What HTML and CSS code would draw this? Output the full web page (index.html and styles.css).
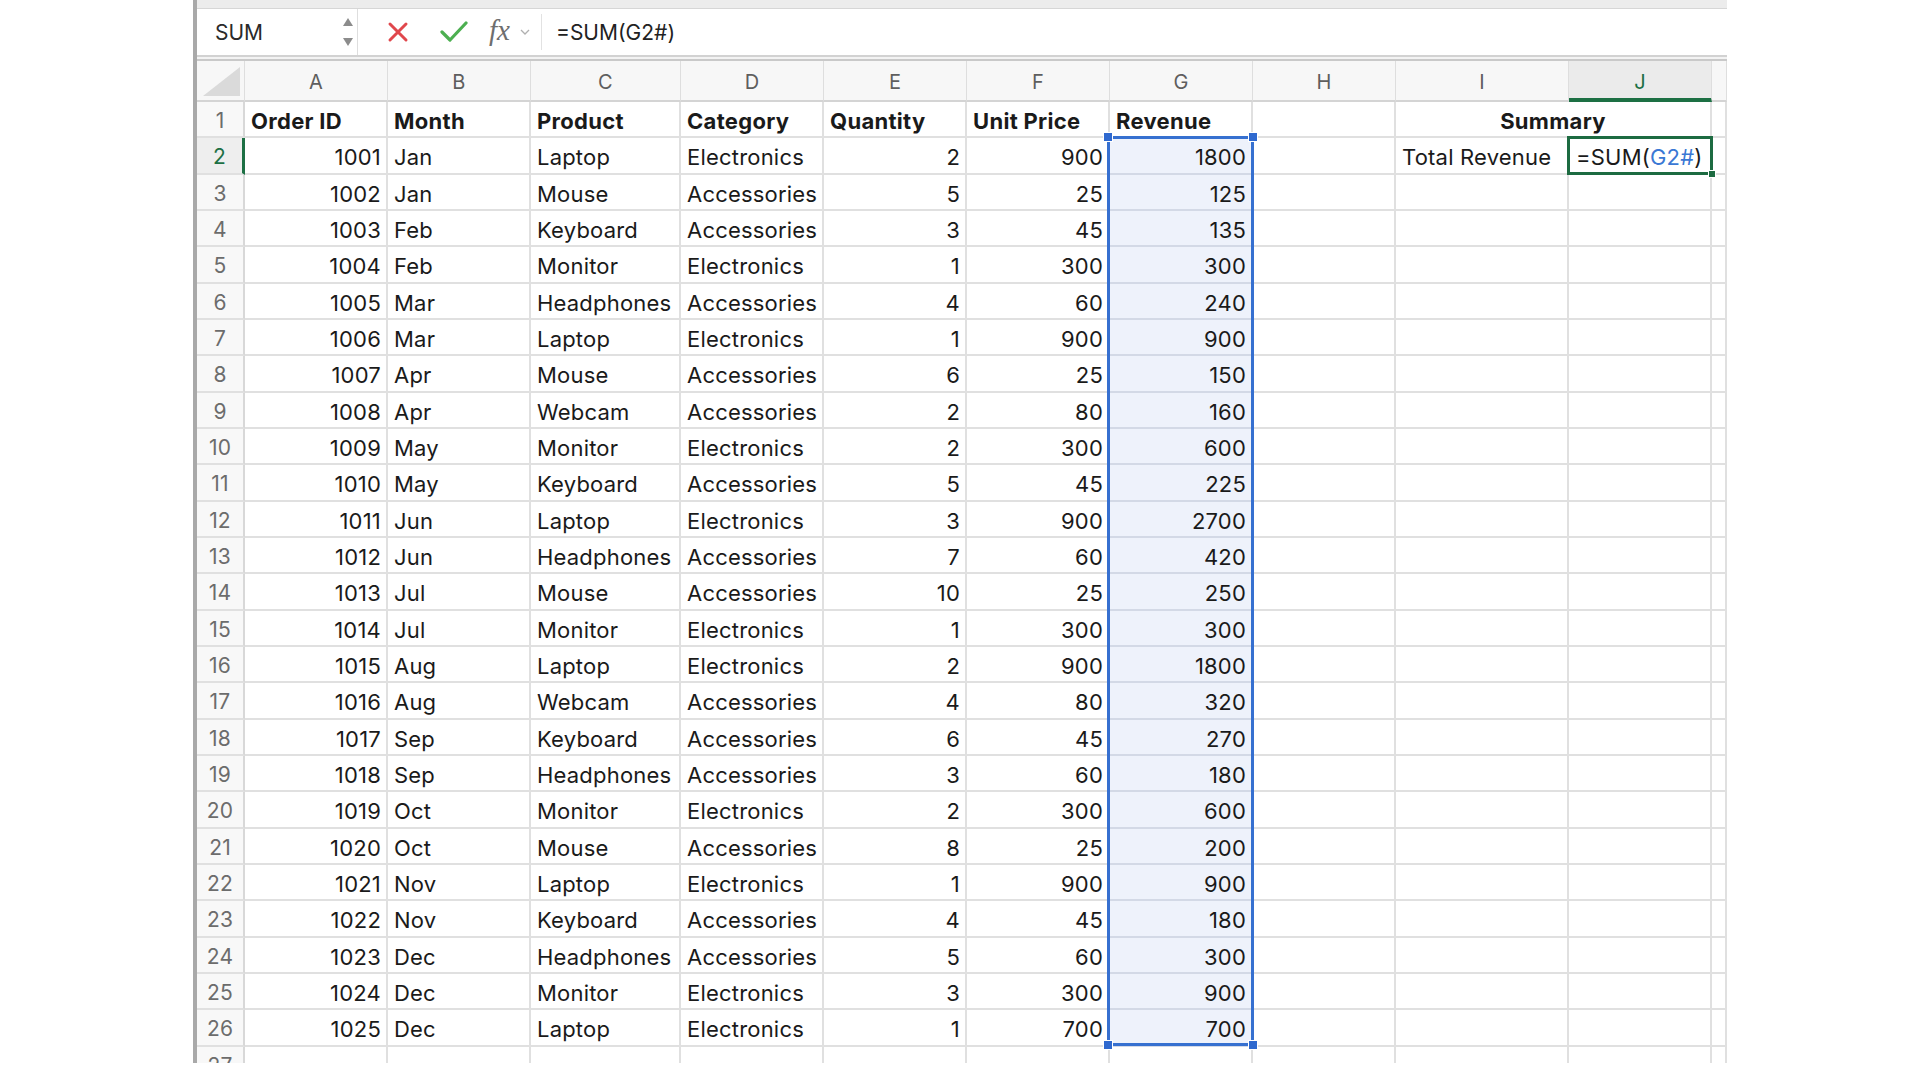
FILE: index.html
```html
<!DOCTYPE html>
<html lang="en">
<head>
<meta charset="utf-8">
<title>Sheet</title>
<link rel="stylesheet" href="styles.css">
</head>
<body>
<div class="app">
  <div class="top-strip"></div>
  <div class="fbar">
    <div class="namebox">
      <span class="nb-text">SUM</span>
      <span class="nb-arrows">
        <svg width="12" height="30" viewBox="0 0 12 30"><path d="M6 1 L11 9 L1 9 Z" fill="#8c8c8c"/><path d="M6 29 L11 21 L1 21 Z" fill="#8c8c8c"/></svg>
      </span>
    </div>
    <div class="fb-icons">
      <svg class="ic-x" width="22" height="22" viewBox="0 0 22 22"><path d="M3 3 L19 19 M19 3 L3 19" stroke="#e0474c" stroke-width="3" stroke-linecap="round"/></svg>
      <svg class="ic-ok" width="28" height="24" viewBox="0 0 28 24"><path d="M2 12 L10 20 L26 3" fill="none" stroke="#4caf50" stroke-width="3.2" stroke-linecap="round" stroke-linejoin="round"/></svg>
      <span class="fx">fx</span>
      <svg class="ic-chev" width="10" height="8" viewBox="0 0 10 8"><path d="M1 2 L5 6 L9 2" fill="none" stroke="#b0b0b0" stroke-width="1.3"/></svg>
    </div>
    <div class="fb-input">=SUM(G2#)</div>
  </div>
  <div class="fbar-bottom"></div>

  <div class="grid">
    <div class="row hdr">
      <div class="c corner"><span class="tri"></span></div>
      <div class="c ch">A</div><div class="c ch">B</div><div class="c ch">C</div><div class="c ch">D</div><div class="c ch">E</div><div class="c ch">F</div><div class="c ch">G</div><div class="c ch">H</div><div class="c ch">I</div><div class="c ch active">J</div><div class="c ch"></div>
    </div>
    <div class="row">
      <div class="c rh">1</div>
      <div class="c b">Order ID</div><div class="c b">Month</div><div class="c b">Product</div><div class="c b">Category</div><div class="c b">Quantity</div><div class="c b">Unit Price</div><div class="c b">Revenue</div><div class="c"></div><div class="c b merged">Summary</div><div class="c"></div>
    </div>
    <div class="row">
      <div class="c rh active">2</div>
      <div class="c n">1001</div><div class="c">Jan</div><div class="c">Laptop</div><div class="c">Electronics</div><div class="c n">2</div><div class="c n">900</div><div class="c n sel first">1800<div class="range"><span class="hd tl"></span><span class="hd tr"></span><span class="hd bl"></span><span class="hd br"></span></div></div><div class="c"></div><div class="c">Total Revenue</div><div class="c edit"><span class="et">=SUM(<span class="ref">G2#</span>)</span><div class="cur"><span class="hg"></span></div></div><div class="c"></div>
    </div>
    <div class="row"><div class="c rh">3</div><div class="c n">1002</div><div class="c">Jan</div><div class="c">Mouse</div><div class="c">Accessories</div><div class="c n">5</div><div class="c n">25</div><div class="c n sel">125</div><div class="c"></div><div class="c"></div><div class="c"></div><div class="c"></div></div>
    <div class="row"><div class="c rh">4</div><div class="c n">1003</div><div class="c">Feb</div><div class="c">Keyboard</div><div class="c">Accessories</div><div class="c n">3</div><div class="c n">45</div><div class="c n sel">135</div><div class="c"></div><div class="c"></div><div class="c"></div><div class="c"></div></div>
    <div class="row"><div class="c rh">5</div><div class="c n">1004</div><div class="c">Feb</div><div class="c">Monitor</div><div class="c">Electronics</div><div class="c n">1</div><div class="c n">300</div><div class="c n sel">300</div><div class="c"></div><div class="c"></div><div class="c"></div><div class="c"></div></div>
    <div class="row"><div class="c rh">6</div><div class="c n">1005</div><div class="c">Mar</div><div class="c">Headphones</div><div class="c">Accessories</div><div class="c n">4</div><div class="c n">60</div><div class="c n sel">240</div><div class="c"></div><div class="c"></div><div class="c"></div><div class="c"></div></div>
    <div class="row"><div class="c rh">7</div><div class="c n">1006</div><div class="c">Mar</div><div class="c">Laptop</div><div class="c">Electronics</div><div class="c n">1</div><div class="c n">900</div><div class="c n sel">900</div><div class="c"></div><div class="c"></div><div class="c"></div><div class="c"></div></div>
    <div class="row"><div class="c rh">8</div><div class="c n">1007</div><div class="c">Apr</div><div class="c">Mouse</div><div class="c">Accessories</div><div class="c n">6</div><div class="c n">25</div><div class="c n sel">150</div><div class="c"></div><div class="c"></div><div class="c"></div><div class="c"></div></div>
    <div class="row"><div class="c rh">9</div><div class="c n">1008</div><div class="c">Apr</div><div class="c">Webcam</div><div class="c">Accessories</div><div class="c n">2</div><div class="c n">80</div><div class="c n sel">160</div><div class="c"></div><div class="c"></div><div class="c"></div><div class="c"></div></div>
    <div class="row"><div class="c rh">10</div><div class="c n">1009</div><div class="c">May</div><div class="c">Monitor</div><div class="c">Electronics</div><div class="c n">2</div><div class="c n">300</div><div class="c n sel">600</div><div class="c"></div><div class="c"></div><div class="c"></div><div class="c"></div></div>
    <div class="row"><div class="c rh">11</div><div class="c n">1010</div><div class="c">May</div><div class="c">Keyboard</div><div class="c">Accessories</div><div class="c n">5</div><div class="c n">45</div><div class="c n sel">225</div><div class="c"></div><div class="c"></div><div class="c"></div><div class="c"></div></div>
    <div class="row"><div class="c rh">12</div><div class="c n">1011</div><div class="c">Jun</div><div class="c">Laptop</div><div class="c">Electronics</div><div class="c n">3</div><div class="c n">900</div><div class="c n sel">2700</div><div class="c"></div><div class="c"></div><div class="c"></div><div class="c"></div></div>
    <div class="row"><div class="c rh">13</div><div class="c n">1012</div><div class="c">Jun</div><div class="c">Headphones</div><div class="c">Accessories</div><div class="c n">7</div><div class="c n">60</div><div class="c n sel">420</div><div class="c"></div><div class="c"></div><div class="c"></div><div class="c"></div></div>
    <div class="row"><div class="c rh">14</div><div class="c n">1013</div><div class="c">Jul</div><div class="c">Mouse</div><div class="c">Accessories</div><div class="c n">10</div><div class="c n">25</div><div class="c n sel">250</div><div class="c"></div><div class="c"></div><div class="c"></div><div class="c"></div></div>
    <div class="row"><div class="c rh">15</div><div class="c n">1014</div><div class="c">Jul</div><div class="c">Monitor</div><div class="c">Electronics</div><div class="c n">1</div><div class="c n">300</div><div class="c n sel">300</div><div class="c"></div><div class="c"></div><div class="c"></div><div class="c"></div></div>
    <div class="row"><div class="c rh">16</div><div class="c n">1015</div><div class="c">Aug</div><div class="c">Laptop</div><div class="c">Electronics</div><div class="c n">2</div><div class="c n">900</div><div class="c n sel">1800</div><div class="c"></div><div class="c"></div><div class="c"></div><div class="c"></div></div>
    <div class="row"><div class="c rh">17</div><div class="c n">1016</div><div class="c">Aug</div><div class="c">Webcam</div><div class="c">Accessories</div><div class="c n">4</div><div class="c n">80</div><div class="c n sel">320</div><div class="c"></div><div class="c"></div><div class="c"></div><div class="c"></div></div>
    <div class="row"><div class="c rh">18</div><div class="c n">1017</div><div class="c">Sep</div><div class="c">Keyboard</div><div class="c">Accessories</div><div class="c n">6</div><div class="c n">45</div><div class="c n sel">270</div><div class="c"></div><div class="c"></div><div class="c"></div><div class="c"></div></div>
    <div class="row"><div class="c rh">19</div><div class="c n">1018</div><div class="c">Sep</div><div class="c">Headphones</div><div class="c">Accessories</div><div class="c n">3</div><div class="c n">60</div><div class="c n sel">180</div><div class="c"></div><div class="c"></div><div class="c"></div><div class="c"></div></div>
    <div class="row"><div class="c rh">20</div><div class="c n">1019</div><div class="c">Oct</div><div class="c">Monitor</div><div class="c">Electronics</div><div class="c n">2</div><div class="c n">300</div><div class="c n sel">600</div><div class="c"></div><div class="c"></div><div class="c"></div><div class="c"></div></div>
    <div class="row"><div class="c rh">21</div><div class="c n">1020</div><div class="c">Oct</div><div class="c">Mouse</div><div class="c">Accessories</div><div class="c n">8</div><div class="c n">25</div><div class="c n sel">200</div><div class="c"></div><div class="c"></div><div class="c"></div><div class="c"></div></div>
    <div class="row"><div class="c rh">22</div><div class="c n">1021</div><div class="c">Nov</div><div class="c">Laptop</div><div class="c">Electronics</div><div class="c n">1</div><div class="c n">900</div><div class="c n sel">900</div><div class="c"></div><div class="c"></div><div class="c"></div><div class="c"></div></div>
    <div class="row"><div class="c rh">23</div><div class="c n">1022</div><div class="c">Nov</div><div class="c">Keyboard</div><div class="c">Accessories</div><div class="c n">4</div><div class="c n">45</div><div class="c n sel">180</div><div class="c"></div><div class="c"></div><div class="c"></div><div class="c"></div></div>
    <div class="row"><div class="c rh">24</div><div class="c n">1023</div><div class="c">Dec</div><div class="c">Headphones</div><div class="c">Accessories</div><div class="c n">5</div><div class="c n">60</div><div class="c n sel">300</div><div class="c"></div><div class="c"></div><div class="c"></div><div class="c"></div></div>
    <div class="row"><div class="c rh">25</div><div class="c n">1024</div><div class="c">Dec</div><div class="c">Monitor</div><div class="c">Electronics</div><div class="c n">3</div><div class="c n">300</div><div class="c n sel">900</div><div class="c"></div><div class="c"></div><div class="c"></div><div class="c"></div></div>
    <div class="row"><div class="c rh">26</div><div class="c n">1025</div><div class="c">Dec</div><div class="c">Laptop</div><div class="c">Electronics</div><div class="c n">1</div><div class="c n">700</div><div class="c n sel last">700</div><div class="c"></div><div class="c"></div><div class="c"></div><div class="c"></div></div>
    <div class="row"><div class="c rh">27</div><div class="c"></div><div class="c"></div><div class="c"></div><div class="c"></div><div class="c"></div><div class="c"></div><div class="c"></div><div class="c"></div><div class="c"></div><div class="c"></div><div class="c"></div></div>
  </div>
</div>
</body>
</html>
```

FILE: styles.css
```css
* { box-sizing: border-box; }
html, body { margin: 0; padding: 0; background: #ffffff; }
body {
  font-family: Inter, "Liberation Sans", sans-serif;
  color: #1a1a1a;
  width: 1920px;
  height: 1080px;
  overflow: hidden;
}
.app {
  margin-left: 193px;
  width: 1534px;
  height: 1063px;
  border-left: 4px solid #a9a9a9;
  overflow: hidden;
  display: flex;
  flex-direction: column;
}
.top-strip {
  height: 9px;
  flex: none;
  background: #ececec;
  border-bottom: 1px solid #d6d6d6;
}
.fbar {
  height: 46px;
  flex: none;
  display: flex;
  align-items: stretch;
  background: #ffffff;
}
.namebox {
  width: 161px;
  flex: none;
  display: flex;
  align-items: center;
  justify-content: space-between;
  padding: 0 3px 0 18px;
  border-right: 1px solid #dedede;
}
.nb-text { font-size: 21px; color: #2a2a2a; }
.nb-arrows { display: flex; align-items: center; }
.fb-icons {
  width: 184px;
  flex: none;
  display: flex;
  align-items: center;
  padding-left: 29px;
  border-right: 1px solid #e2e2e2;
  margin: 5px 0;
}
.ic-x { margin-right: 31px; }
.ic-ok { margin-right: 21px; }
.fx {
  font-family: "Liberation Serif", "DejaVu Serif", serif;
  font-style: italic;
  font-size: 29px;
  color: #6e6e6e;
  margin-right: 10px;
  line-height: 1;
  margin-top: -3px;
}
.fb-input {
  flex: 1;
  display: flex;
  align-items: center;
  padding-left: 14px;
  font-size: 21px;
  color: #222;
}
.fbar-bottom {
  height: 6px;
  flex: none;
  border-top: 2px solid #d2d2d2;
  border-bottom: 2px solid #c9c9c9;
  background: #f3f3f3;
}
.grid { flex: none; }
.row {
  display: grid;
  grid-template-columns: 48px 143px 143px 150px 143px 143px 143px 143px 143px 173px 143px 15px;
  height: 36.33px;
}
.row.hdr { height: 41px; }
.c {
  border-right: 2px solid #e0e0e0;
  border-bottom: 2px solid #e0e0e0;
  padding: 0 6px;
  font-size: 22px;
  letter-spacing: 0.2px;
  white-space: nowrap;
  display: flex;
  align-items: center;
  padding-top: 4px;
  min-width: 0;
}
.c.n { justify-content: flex-end; padding-right: 5px; }
.c.b { font-weight: 700; letter-spacing: 0.3px; }
.merged { grid-column: span 2; justify-content: center; }
.hdr .c {
  background: #f7f7f7;
  border-bottom: 2px solid #d4d4d4;
  border-right: 1px solid #dedede;
  padding-top: 2px;
}
.ch {
  justify-content: center;
  color: #5e5e5e;
  font-size: 20px;
  font-weight: 400;
}
.hdr .ch.active {
  background: #ebebeb;
  color: #1d7044;
  border-bottom: 4px solid #1d7044;
  padding-top: 4px;
}
.corner { position: relative; padding: 0; }
.tri {
  position: absolute;
  left: 6px;
  right: 4px;
  top: 6px;
  bottom: 4px;
  background: #dadada;
  clip-path: polygon(100% 0, 100% 100%, 0 100%);
}
.rh {
  justify-content: center;
  background: #f8f8f8;
  color: #6c6c6c;
  font-size: 21px;
  padding: 3px 0 0 0;
  border-right: 2px solid #d8d8d8;
}
.rh.active {
  background: #eeeeee;
  color: #1d7044;
  border-right: 3px solid #1d7044;
}
.sel {
  background: #eef2fb;
  border-bottom-color: #d3d9e6;
}
.sel.first { position: relative; overflow: visible; }
.range {
  position: absolute;
  left: -3px;
  top: -2px;
  width: 147px;
  height: 910px;
  border: 3px solid #3670d0;
  pointer-events: none;
  z-index: 2;
}
.hd {
  position: absolute;
  width: 10px;
  height: 10px;
  background: #2f69cf;
  border: 1px solid #ffffff;
}
.hd.tl { left: -7px; top: -7px; }
.hd.tr { right: -7px; top: -7px; }
.hd.bl { left: -7px; bottom: -7px; }
.hd.br { right: -7px; bottom: -7px; }
.edit { position: relative; overflow: visible; padding-left: 7px; }
.ref { color: #3a78d4; }
.cur {
  position: absolute;
  left: -2px;
  top: -2px;
  width: 146px;
  height: 38.5px;
  border: 3px solid #1d6b41;
  z-index: 3;
}
.hg {
  position: absolute;
  right: -6px;
  bottom: -6px;
  width: 8px;
  height: 8px;
  background: #1d6b41;
  border: 1px solid #ffffff;
}
```
